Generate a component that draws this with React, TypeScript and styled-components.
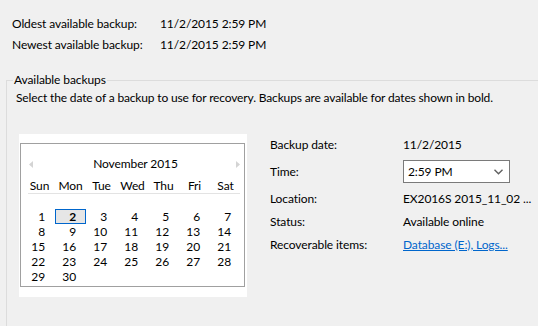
import React from "react";
import styled, { createGlobalStyle } from "styled-components";

const Global = createGlobalStyle`
  html, body { margin: 0; padding: 0; background: #f0f0f0; overflow: hidden; }
  body { font-family: Lato, "Noto Sans", sans-serif; font-size: 12px; color: #000; letter-spacing: -0.1px; }
  #root { width: 538px; height: 326px; overflow: hidden; }
`;

const Page = styled.div`
  width: 538px;
  height: 326px;
  overflow: hidden;
  padding-top: 13px;
  box-sizing: border-box;
`;

const Summary = styled.div`
  display: grid;
  grid-template-columns: 148px auto;
  grid-auto-rows: 21px;
  align-items: center;
  padding-left: 12px;
`;

const Text = styled.span`
  white-space: nowrap;
  line-height: 16px;
`;

const Group = styled.fieldset`
  margin: 17px 0 0 6px;
  padding: 0;
  width: 600px;
  height: 300px;
  border: 1px solid #dcdcdc;
  min-width: 0;
  box-sizing: border-box;
`;

const Legend = styled.legend`
  margin-left: 6px;
  padding: 0 1px;
  line-height: 16px;
`;

const Description = styled.div`
  padding-left: 9px;
  line-height: 16px;
  margin-top: 2px;
  white-space: nowrap;
  letter-spacing: -0.15px;
`;

const Content = styled.div`
  display: flex;
  align-items: flex-start;
  gap: 23px;
  padding-left: 12px;
  margin-top: 26px;
`;

const CalendarFrame = styled.div`
  background: #fff;
  padding: 9px 2px 10px 1px;
  margin-top: 2px;
`;

const Calendar = styled.div`
  width: 225px;
  box-sizing: border-box;
  border: 1px solid #a0a0a0;
  padding: 12px 0 2px 3px;
  display: flex;
  flex-direction: column;
`;

const MonthBar = styled.div`
  display: flex;
  align-items: center;
  justify-content: space-between;
  height: 16px;
  padding: 0 4px 0 5px;
  margin-bottom: 6px;
`;

const MonthTitle = styled.span`
  line-height: 16px;
  margin-left: 2px;
`;

const Arrow = styled.svg`
  width: 4px;
  height: 7px;
  display: block;
`;

const DayGrid = styled.div`
  display: grid;
  grid-template-columns: repeat(7, 31px);
  grid-auto-rows: 15px;
`;

const HeaderGrid = styled(DayGrid)`
  position: relative;
  border-bottom: 1px solid transparent;
  &::after {
    content: "";
    position: absolute;
    left: 4px;
    right: 4px;
    bottom: -1px;
    height: 1px;
    background: #e3e3e3;
  }
`;

const HeaderCell = styled.span`
  text-align: center;
  line-height: 15px;
`;

const DayCell = styled.span<{ $selected?: boolean }>`
  text-align: right;
  line-height: 16px;
  padding-right: 10px;
  box-sizing: border-box;
  font-weight: ${(p) => (p.$selected ? 700 : 400)};
  background: ${(p) => (p.$selected ? "#e6e6e6" : "transparent")};
  outline: ${(p) => (p.$selected ? "1px solid #0066cc" : "none")};
  outline-offset: -1px;
`;

const Details = styled.div`
  display: flex;
  flex-direction: column;
  padding-top: 1px;
`;

const DetailRow = styled.div<{ $spaced?: boolean }>`
  display: grid;
  grid-template-columns: 133px auto;
  align-items: center;
  height: 23px;
  margin-bottom: ${(p) => (p.$spaced ? "4px" : "0")};
`;

const Select = styled.div`
  width: 107px;
  height: 23px;
  box-sizing: border-box;
  border: 1px solid #7a7a7a;
  background: #fff;
  display: flex;
  align-items: center;
  justify-content: space-between;
  padding: 0 6px 0 4px;
`;

const Link = styled.a`
  color: #0066cc;
  text-decoration: underline;
  white-space: nowrap;
  line-height: 16px;
  cursor: pointer;
`;

const days: (number | null)[][] = [
  [null, null, null, null, null, null, null],
  [1, 2, 3, 4, 5, 6, 7],
  [8, 9, 10, 11, 12, 13, 14],
  [15, 16, 17, 18, 19, 20, 21],
  [22, 23, 24, 25, 26, 27, 28],
  [29, 30, null, null, null, null, null],
];

const weekdays = ["Sun", "Mon", "Tue", "Wed", "Thu", "Fri", "Sat"];

export default function App() {
  return (
    <Page>
      <Global />
      <Summary>
        <Text>Oldest available backup:</Text>
        <Text>11/2/2015 2:59 PM</Text>
        <Text>Newest available backup:</Text>
        <Text>11/2/2015 2:59 PM</Text>
      </Summary>
      <Group>
        <Legend>Available backups</Legend>
        <Description>
          Select the date of a backup to use for recovery. Backups are available for dates shown in bold.
        </Description>
        <Content>
          <CalendarFrame>
            <Calendar>
              <MonthBar>
                <Arrow viewBox="0 0 4 7">
                  <path d="M4 0 L0 3.5 L4 7 Z" fill="#d4d4d4" />
                </Arrow>
                <MonthTitle>November 2015</MonthTitle>
                <Arrow viewBox="0 0 4 7">
                  <path d="M0 0 L4 3.5 L0 7 Z" fill="#d4d4d4" />
                </Arrow>
              </MonthBar>
              <HeaderGrid>
                {weekdays.map((w) => (
                  <HeaderCell key={w}>{w}</HeaderCell>
                ))}
              </HeaderGrid>
              <DayGrid>
                {days.flat().map((d, i) => (
                  <DayCell key={i} $selected={d === 2}>
                    {d ?? ""}
                  </DayCell>
                ))}
              </DayGrid>
            </Calendar>
          </CalendarFrame>
          <Details>
            <DetailRow $spaced>
              <Text>Backup date:</Text>
              <Text>11/2/2015</Text>
            </DetailRow>
            <DetailRow $spaced>
              <Text>Time:</Text>
              <Select>
                <Text>2:59 PM</Text>
                <svg width="9" height="6" viewBox="0 0 9 6">
                  <path d="M0.5 0.8 L4.5 4.8 L8.5 0.8" fill="none" stroke="#606060" strokeWidth="1.4" />
                </svg>
              </Select>
            </DetailRow>
            <DetailRow>
              <Text>Location:</Text>
              <Text>EX2016S 2015_11_02 ...</Text>
            </DetailRow>
            <DetailRow>
              <Text>Status:</Text>
              <Text>Available online</Text>
            </DetailRow>
            <DetailRow>
              <Text>Recoverable items:</Text>
              <Link>Database (E:), Logs...</Link>
            </DetailRow>
          </Details>
        </Content>
      </Group>
    </Page>
  );
}
